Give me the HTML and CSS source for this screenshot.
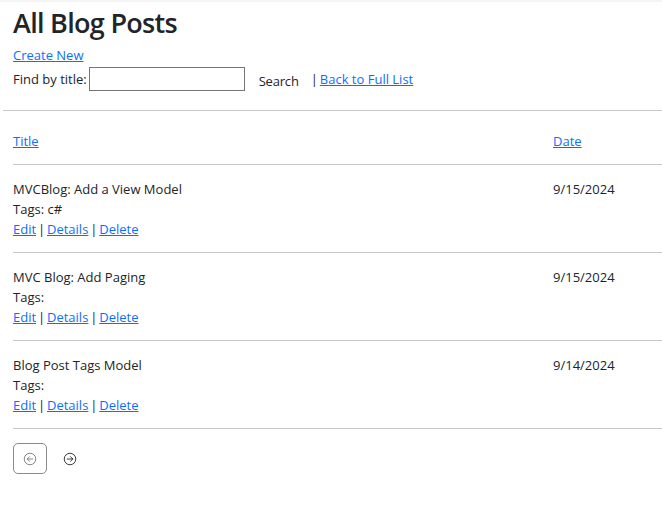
FILE: index.html
```html
<!DOCTYPE html>
<html>
<head>
<meta charset="utf-8">
<link rel="stylesheet" href="styles.css">
</head>
<body>
<div class="topband"></div>
<main class="page">
  <h1 class="title">All Blog Posts</h1>
  <p class="create"><a href="#">Create New</a></p>
  <form class="search">
    <label class="search-label">Find by title:</label>
    <input class="search-input" type="text">
    <span class="search-btn">Search</span>
    <span class="sep">|</span>
    <a href="#">Back to Full List</a>
  </form>
</main>
<hr class="rule">
<div class="page">
  <table class="posts">
    <thead>
      <tr><th><a href="#">Title</a></th><th class="date-col"><a href="#">Date</a></th></tr>
    </thead>
    <tbody>
      <tr>
        <td>
          <div>MVCBlog: Add a View Model</div>
          <div>Tags: c#</div>
          <div class="actions"><a href="#">Edit</a> | <a href="#">Details</a> | <a href="#">Delete</a></div>
        </td>
        <td class="date-col">9/15/2024</td>
      </tr>
      <tr>
        <td>
          <div>MVC Blog: Add Paging</div>
          <div>Tags:</div>
          <div class="actions"><a href="#">Edit</a> | <a href="#">Details</a> | <a href="#">Delete</a></div>
        </td>
        <td class="date-col">9/15/2024</td>
      </tr>
      <tr>
        <td>
          <div>Blog Post Tags Model</div>
          <div>Tags:</div>
          <div class="actions"><a href="#">Edit</a> | <a href="#">Details</a> | <a href="#">Delete</a></div>
        </td>
        <td class="date-col">9/14/2024</td>
      </tr>
    </tbody>
  </table>
  <nav class="pager">
    <span class="pg-btn pg-boxed">
      <svg width="14" height="14" viewBox="0 0 16 16" fill="none" stroke="#777" stroke-width="1"><circle cx="8" cy="8" r="6.6"/><path d="M11.2 8H4.8M7.4 5.4 4.8 8l2.6 2.6" stroke-linecap="round" stroke-linejoin="round"/></svg>
    </span>
    <span class="pg-btn">
      <svg width="14" height="14" viewBox="0 0 16 16" fill="none" stroke="#222" stroke-width="1"><circle cx="8" cy="8" r="6.6"/><path d="M4.8 8h6.4M8.6 5.4 11.2 8l-2.6 2.6" stroke-linecap="round" stroke-linejoin="round"/></svg>
    </span>
  </nav>
</div>
</body>
</html>
```
FILE: styles.css
```css
html, body {
  margin: 0;
  padding: 0;
  background: #fff;
}
body {
  font-family: "Open Sans", "Noto Sans", sans-serif;
  font-size: 13px;
  line-height: 20px;
  color: #212529;
}
a {
  color: #0d6efd;
  text-decoration: underline;
}
.topband {
  height: 2px;
  background: #f5f5f5;
}
.page {
  padding: 0 0 0 13px;
}
.title {
  margin: 4px 0 0;
  font-size: 27px;
  line-height: 34px;
  font-weight: 600;
  letter-spacing: -0.7px;
}
.create {
  margin: 5px 0 0;
}
.search {
  display: flex;
  align-items: center;
  margin-top: 1px;
  height: 26px;
}
.search-label {
  margin-right: 2px;
}
.search-input {
  width: 156px;
  height: 24px;
  box-sizing: border-box;
  border: 1px solid #767676;
  padding: 1px;
  margin: 0;
  font: inherit;
}
.search-btn {
  margin-left: 14px;
  padding-top: 3px;
  letter-spacing: -0.2px;
}
.sep {
  margin-left: 12px;
  margin-right: 2px;
}
.rule {
  margin: 18px 0 0 3px;
  border: 0;
  border-top: 1px solid #c8c8c8;
  height: 0;
}
.posts {
  width: 649px;
  border-collapse: collapse;
  margin-top: 7px;
}
.posts th {
  text-align: left;
  font-weight: 400;
  padding: 13px 0 13px;
  border-bottom: 1px solid #c8c8c8;
}
.posts td {
  vertical-align: top;
  padding: 14px 0 13px;
  border-bottom: 1px solid #c8c8c8;
}
.actions {
  word-spacing: -1.5px;
}
.posts .date-col {
  width: 109px;
}
.pager {
  display: flex;
  align-items: center;
  gap: 6px;
  margin-top: 14px;
}
.pg-btn {
  display: flex;
  align-items: center;
  justify-content: center;
  width: 34px;
  height: 31px;
  box-sizing: border-box;
}
.pg-boxed {
  border: 1px solid #8a8a8a;
  border-radius: 5px;
}
```
